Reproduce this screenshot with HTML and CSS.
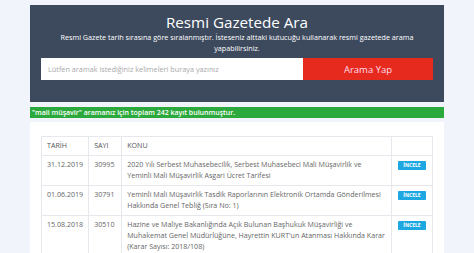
FILE: index.html
```html
<!DOCTYPE html>
<html lang="tr">
<head>
  <meta charset="UTF-8" />
  <meta name="viewport" content="width=device-width, initial-scale=1.0" />
  <title>Resmi Gazetede Ara</title>
  <link rel="stylesheet" href="styles.css">
</head>
<body>
  <div class="container">
    <!-- arama kutusu -->
    <div class="search-box">
      <h2>Resmi Gazetede Ara</h2>
      <p>Resmi Gazete tarih sırasına göre sıralanmıştır. İsteseniz alttaki kutucuğu kullanarak resmi gazetede arama yapabilirsiniz.</p>
      <div class="search-row">
        <input type="text" placeholder="Lütfen aramak istediğiniz kelimeleri buraya yazınız" />
        <button>Arama Yap</button>
      </div>
    </div>

    <div class="result-info">"mali müşavir" aramanız için toplam 242 kayıt bulunmuştur.</div>

    <div class="card">
      <table>
        <thead>
          <tr>
            <th class="col-date">TARİH</th>
            <th class="col-no">SAYI</th>
            <th>KONU</th>
            <th class="col-btn"></th>
          </tr>
        </thead>
        <tbody>
          <tr>
            <td>31.12.2019</td>
            <td>30995</td>
            <td>2020 Yılı Serbest Muhasebecilik, Serbest Muhasebeci Mali Müşavirlik ve Yeminli Mali Müşavirlik Asgari Ücret Tarifesi</td>
            <td><a class="btn-incele" href="#">İNCELE</a></td>
          </tr>
          <tr>
            <td>01.06.2019</td>
            <td>30791</td>
            <td>Yeminli Mali Müşavirlik Tasdik Raporlarının Elektronik Ortamda Gönderilmesi Hakkında Genel Tebliğ (Sıra No: 1)</td>
            <td><a class="btn-incele" href="#">İNCELE</a></td>
          </tr>
          <tr>
            <td>15.08.2018</td>
            <td>30510</td>
            <td>Hazine ve Maliye Bakanlığında Açık Bulunan Başhukuk Müşavirliği ve Muhakemat Genel Müdürlüğüne, Hayrettin KURT'un Atanması Hakkında Karar (Karar Sayısı: 2018/108)</td>
            <td><a class="btn-incele" href="#">İNCELE</a></td>
          </tr>
        </tbody>
      </table>
    </div>
  </div>
</body>
</html>
```

FILE: styles.css
```css
body {
  margin: 0;
  font-family: "Open Sans", "Liberation Sans", sans-serif;
  background-color: #f1f5fb;
}
.container {
  width: 414px;
  margin: 5px auto 0;
}
.search-box {
  background-color: #3d4a5e;
  color: white;
  text-align: center;
  padding: 8px 11px 22px;
}
.search-box h2 {
  margin: 0;
  font-size: 15.2px;
  font-weight: 500;
  line-height: 19px;
}
.search-box p {
  margin: 0;
  font-size: 7.2px;
  line-height: 10.5px;
  padding: 0 10px;
}
.search-row {
  display: flex;
  margin-top: 5px;
  height: 22px;
}
.search-row input {
  flex: 1;
  border: none;
  padding: 0 7px;
  font-family: inherit;
  font-size: 7.3px;
  outline: none;
}
.search-row input::placeholder {
  color: #a9a9a9;
}
.search-row button {
  width: 130px;
  border: none;
  background-color: #e62a1d;
  color: #fde;
  font-family: inherit;
  font-size: 9.5px;
  font-weight: 500;
  cursor: pointer;
}
.result-info {
  margin-top: 5px;
  background-color: #2ca93c;
  color: white;
  font-size: 7px;
  font-weight: 600;
  line-height: 11px;
  padding: 0 2px;
}
.card {
  margin-top: 4px;
  background-color: white;
  padding: 14px 11px;
}
table {
  width: 100%;
  border-collapse: collapse;
  font-size: 7.1px;
  color: #666;
}
th, td {
  border: 1px solid #e6e8ee;
  text-align: left;
  vertical-align: top;
  padding: 3px 5px 4px;
  line-height: 11px;
}
th {
  font-weight: 500;
  color: #555;
}
.col-date { width: 34px; }
.col-no { width: 22px; }
.col-btn { width: 30px; }
.btn-incele {
  display: block;
  margin: 2px 1px 0;
  background-color: #1ea8e2;
  color: white;
  text-align: center;
  font-size: 5px;
  font-weight: 700;
  line-height: 9px;
  text-decoration: none;
  border-radius: 1px;
}
```
